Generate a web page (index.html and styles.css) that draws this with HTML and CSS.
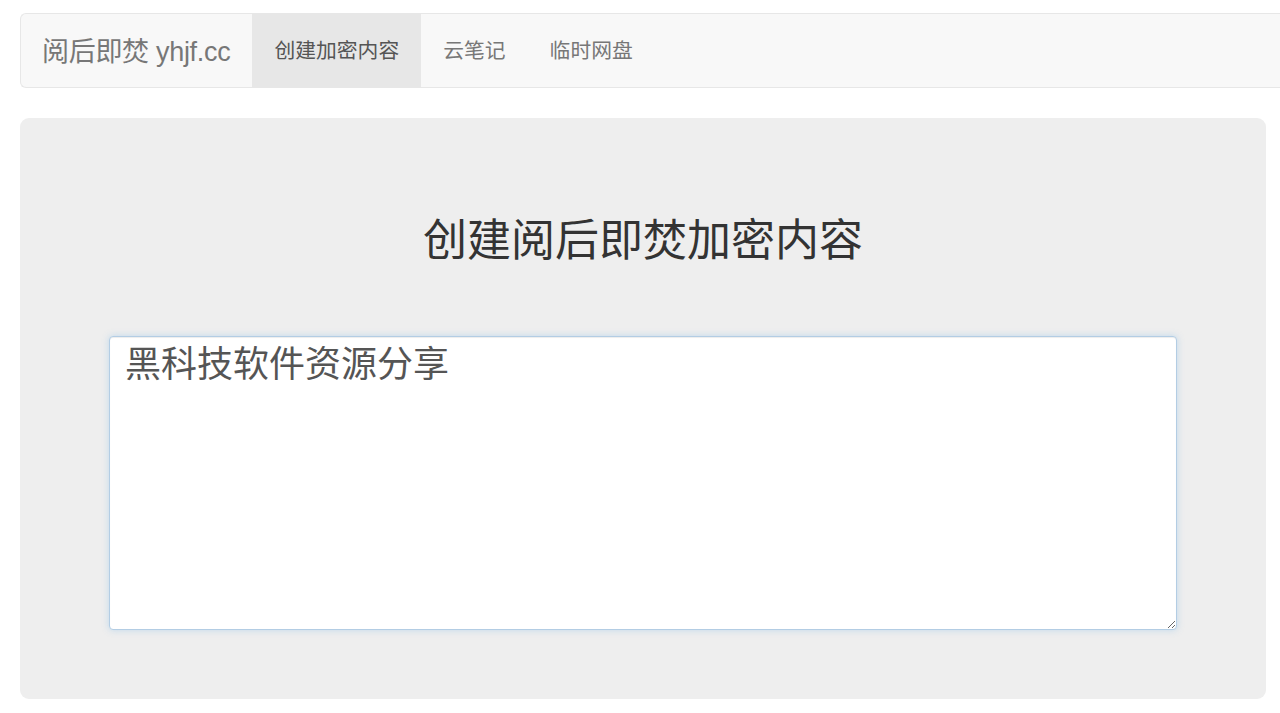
FILE: index.html
```html
<!DOCTYPE html>
<html lang="zh-CN">
<head>
<meta charset="utf-8">
<title>阅后即焚 yhjf.cc</title>
<link rel="stylesheet" href="styles.css">
</head>
<body>
<div class="page">
  <nav class="navbar">
    <a class="brand" href="#">阅后即焚 yhjf.cc</a>
    <ul class="nav">
      <li class="active"><a href="#">创建加密内容</a></li>
      <li><a href="#">云笔记</a></li>
      <li><a href="#">临时网盘</a></li>
    </ul>
  </nav>
  <div class="jumbotron">
    <h1 class="title">创建阅后即焚加密内容</h1>
    <textarea class="content">黑科技软件资源分享</textarea>
  </div>
</div>
</body>
</html>
```

FILE: styles.css
```css
html, body {
  margin: 0;
  padding: 0;
  background: #fff;
  overflow: hidden;
}
body {
  font-family: "Liberation Sans", "Noto Sans CJK SC", sans-serif;
  color: #333;
}
.page {
  padding: 13px 0 0 20px;
}
.navbar {
  display: flex;
  align-items: stretch;
  height: 73px;
  background: #f8f8f8;
  border: 1px solid #e7e7e7;
  border-right: none;
  border-radius: 6px 0 0 6px;
}
.brand {
  display: flex;
  align-items: center;
  padding: 0 22px 3px 21px;
  font-size: 27px;
  color: #777;
  text-decoration: none;
  letter-spacing: -0.3px;
}
.nav {
  display: flex;
  list-style: none;
  margin: 0;
  padding: 0;
}
.nav li a {
  display: flex;
  align-items: center;
  height: 100%;
  box-sizing: border-box;
  padding: 0 22px 3px 22px;
  font-size: 20.8px;
  color: #777;
  text-decoration: none;
}
.nav li.active a {
  background: #e7e7e7;
  color: #555;
}
.jumbotron {
  margin: 30px 14px 0 0;
  background: #eee;
  border-radius: 9px;
  padding: 98px 89px 69px;
  display: flex;
  flex-direction: column;
}
.title {
  margin: 0;
  text-align: center;
  font-size: 44px;
  font-weight: 400;
  line-height: 50px;
  color: #333;
}
.content {
  margin-top: 70px;
  height: 294px;
  box-sizing: border-box;
  padding: 0 15px;
  font-family: "Noto Sans CJK SC", sans-serif;
  font-size: 36px;
  line-height: 1.35;
  color: #555;
  background: #fff;
  border: 1px solid #b3cde4;
  border-radius: 4px;
  box-shadow: inset 0 1px 1px rgba(0,0,0,.075), 0 0 7px rgba(102,175,233,.35);
  outline: none;
}
```
